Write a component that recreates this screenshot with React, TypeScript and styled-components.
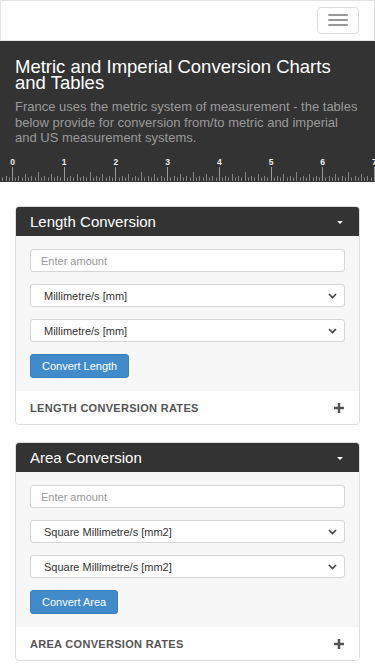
import React from 'react';
import styled, { createGlobalStyle } from 'styled-components';

const GlobalStyle = createGlobalStyle`
  html, body {
    margin: 0;
    padding: 0;
    background: #fff;
    font-family: 'Liberation Sans', Arial, Helvetica, sans-serif;
  }
  * {
    box-sizing: border-box;
  }
`;

const Navbar = styled.nav`
  height: 41px;
  border: 1px solid #e3e3e3;
  background: #fff;
  display: flex;
  justify-content: flex-end;
  align-items: center;
  padding: 0 15px;
`;

const Toggle = styled.button`
  width: 42px;
  height: 27px;
  margin-top: -1px;
  border: 1px solid #ddd;
  border-radius: 4px;
  background: #fff;
  display: flex;
  flex-direction: column;
  justify-content: center;
  align-items: center;
  gap: 3px;
  padding: 0;
`;

const Bar = styled.span`
  display: block;
  width: 20px;
  height: 2px;
  border-radius: 1px;
  background: #999;
`;

const Hero = styled.header`
  background: #333;
  padding-top: 18px;
  display: flex;
  flex-direction: column;
`;

const Title = styled.h1`
  margin: 0 15px;
  font-size: 18.5px;
  line-height: 15.5px;
  font-weight: 400;
  color: #fff;
`;

const Lead = styled.p`
  margin: 9px 15px 0;
  font-size: 13px;
  line-height: 15.7px;
  color: #9a9a9a;
`;

const RulerSvg = styled.svg`
  display: block;
  margin-top: 10px;
`;

const Content = styled.main`
  padding: 24px 15px 10px;
  display: flex;
  flex-direction: column;
  gap: 17px;
`;

const Panel = styled.section`
  border: 1px solid #ddd;
  border-radius: 4px;
  overflow: hidden;
  background: #fff;
`;

const PanelHeading = styled.div`
  height: 29px;
  background: #333;
  color: #fff;
  display: flex;
  align-items: center;
  justify-content: space-between;
  padding: 0 16px 0 14px;
  font-size: 15px;
`;

const Caret = styled.span`
  width: 0;
  height: 0;
  margin-top: 2px;
  border-left: 3.5px solid transparent;
  border-right: 3.5px solid transparent;
  border-top: 3.5px solid #fff;
`;

const PanelBody = styled.div`
  background: #f7f7f7;
  padding: 13px 14px 13px;
  display: flex;
  flex-direction: column;
  gap: 12px;
`;

const TextInput = styled.input`
  height: 23px;
  width: 100%;
  border: 1px solid #d6d6d6;
  border-radius: 3px;
  background: #fff;
  padding: 0 10px;
  font-family: inherit;
  font-size: 11px;
  color: #555;
  &::placeholder {
    color: #999;
  }
`;

const SelectWrap = styled.div`
  position: relative;
  height: 23px;
`;

const Select = styled.select`
  appearance: none;
  width: 100%;
  height: 23px;
  border: 1px solid #d6d6d6;
  border-radius: 3px;
  background: #fff;
  padding: 0 13px;
  font-family: inherit;
  font-size: 11px;
  color: #333;
`;

const Chevron = styled.svg`
  position: absolute;
  right: 8px;
  top: 9px;
  pointer-events: none;
`;

const Button = styled.button`
  align-self: flex-start;
  height: 24px;
  padding: 0 11px;
  border: 1px solid #3a7fc0;
  border-radius: 3px;
  background: #428bca;
  color: #fff;
  font-family: inherit;
  font-size: 11px;
`;

const RatesRow = styled.div`
  height: 33px;
  display: flex;
  align-items: center;
  justify-content: space-between;
  padding: 0 15px 0 14px;
  background: #fff;
`;

const RatesLabel = styled.span`
  font-size: 11px;
  font-weight: 700;
  letter-spacing: 0.3px;
  color: #555;
  text-transform: uppercase;
`;

const PlusIcon = () => (
  <svg width="10" height="10" viewBox="0 0 10 10">
    <rect x="3.75" y="0" width="2.5" height="10" fill="#555" />
    <rect x="0" y="3.75" width="10" height="2.5" fill="#555" />
  </svg>
);

const Ruler = () => {
  const unit = 51.7;
  const start = 12;
  const step = unit / 16;
  const bottom = 25;
  const ticks: React.ReactNode[] = [];
  for (let i = -4; i <= 16 * 7 + 2; i++) {
    const x = Math.round(start + i * step) + 0.5;
    const m = ((i % 16) + 16) % 16;
    let h = 3.5;
    if (m === 0) h = 14;
    else if (m === 8) h = 9;
    else if (m === 4 || m === 12) h = 7;
    else if (m % 2 === 0) h = 5;
    ticks.push(
      <line
        key={i}
        x1={x}
        x2={x}
        y1={bottom}
        y2={bottom - h}
        stroke={m === 0 ? '#9a9a9a' : '#848484'}
        strokeWidth={1}
      />,
    );
  }
  const labels = [0, 1, 2, 3, 4, 5, 6, 7].map((n) => (
    <text
      key={n}
      x={start + n * unit + 0.5}
      y={9}
      fill="#eee"
      fontSize="8.5"
      fontWeight="700"
      textAnchor="middle"
      fontFamily="'Liberation Sans', Arial, sans-serif"
    >
      {n}
    </text>
  ));
  return (
    <RulerSvg width="375" height="26" viewBox="0 0 375 26">
      {labels}
      {ticks}
    </RulerSvg>
  );
};

type Converter = {
  title: string;
  unit: string;
  button: string;
  rates: string;
};

const converters: Converter[] = [
  {
    title: 'Length Conversion',
    unit: 'Millimetre/s [mm]',
    button: 'Convert Length',
    rates: 'Length Conversion Rates',
  },
  {
    title: 'Area Conversion',
    unit: 'Square Millimetre/s [mm2]',
    button: 'Convert Area',
    rates: 'Area Conversion Rates',
  },
];

const UnitSelect = ({ unit }: { unit: string }) => (
  <SelectWrap>
    <Select defaultValue={unit}>
      <option>{unit}</option>
    </Select>
    <Chevron width="9" height="6" viewBox="0 0 9 6">
      <path d="M1 1l3.5 3.5L8 1" fill="none" stroke="#444" strokeWidth="1.6" />
    </Chevron>
  </SelectWrap>
);

const ConverterPanel = ({ data }: { data: Converter }) => (
  <Panel>
    <PanelHeading>
      <span>{data.title}</span>
      <Caret />
    </PanelHeading>
    <PanelBody>
      <TextInput type="text" placeholder="Enter amount" />
      <UnitSelect unit={data.unit} />
      <UnitSelect unit={data.unit} />
      <Button type="button">{data.button}</Button>
    </PanelBody>
    <RatesRow>
      <RatesLabel>{data.rates}</RatesLabel>
      <PlusIcon />
    </RatesRow>
  </Panel>
);

const App = () => (
  <>
    <GlobalStyle />
    <Navbar>
      <Toggle type="button" aria-label="Toggle navigation">
        <Bar />
        <Bar />
        <Bar />
      </Toggle>
    </Navbar>
    <Hero>
      <Title>Metric and Imperial Conversion Charts and Tables</Title>
      <Lead>
        France uses the metric system of measurement - the tables below provide for
        conversion from/to metric and imperial and US measurement systems.
      </Lead>
      <Ruler />
    </Hero>
    <Content>
      {converters.map((c) => (
        <ConverterPanel key={c.title} data={c} />
      ))}
    </Content>
  </>
);

export default App;
